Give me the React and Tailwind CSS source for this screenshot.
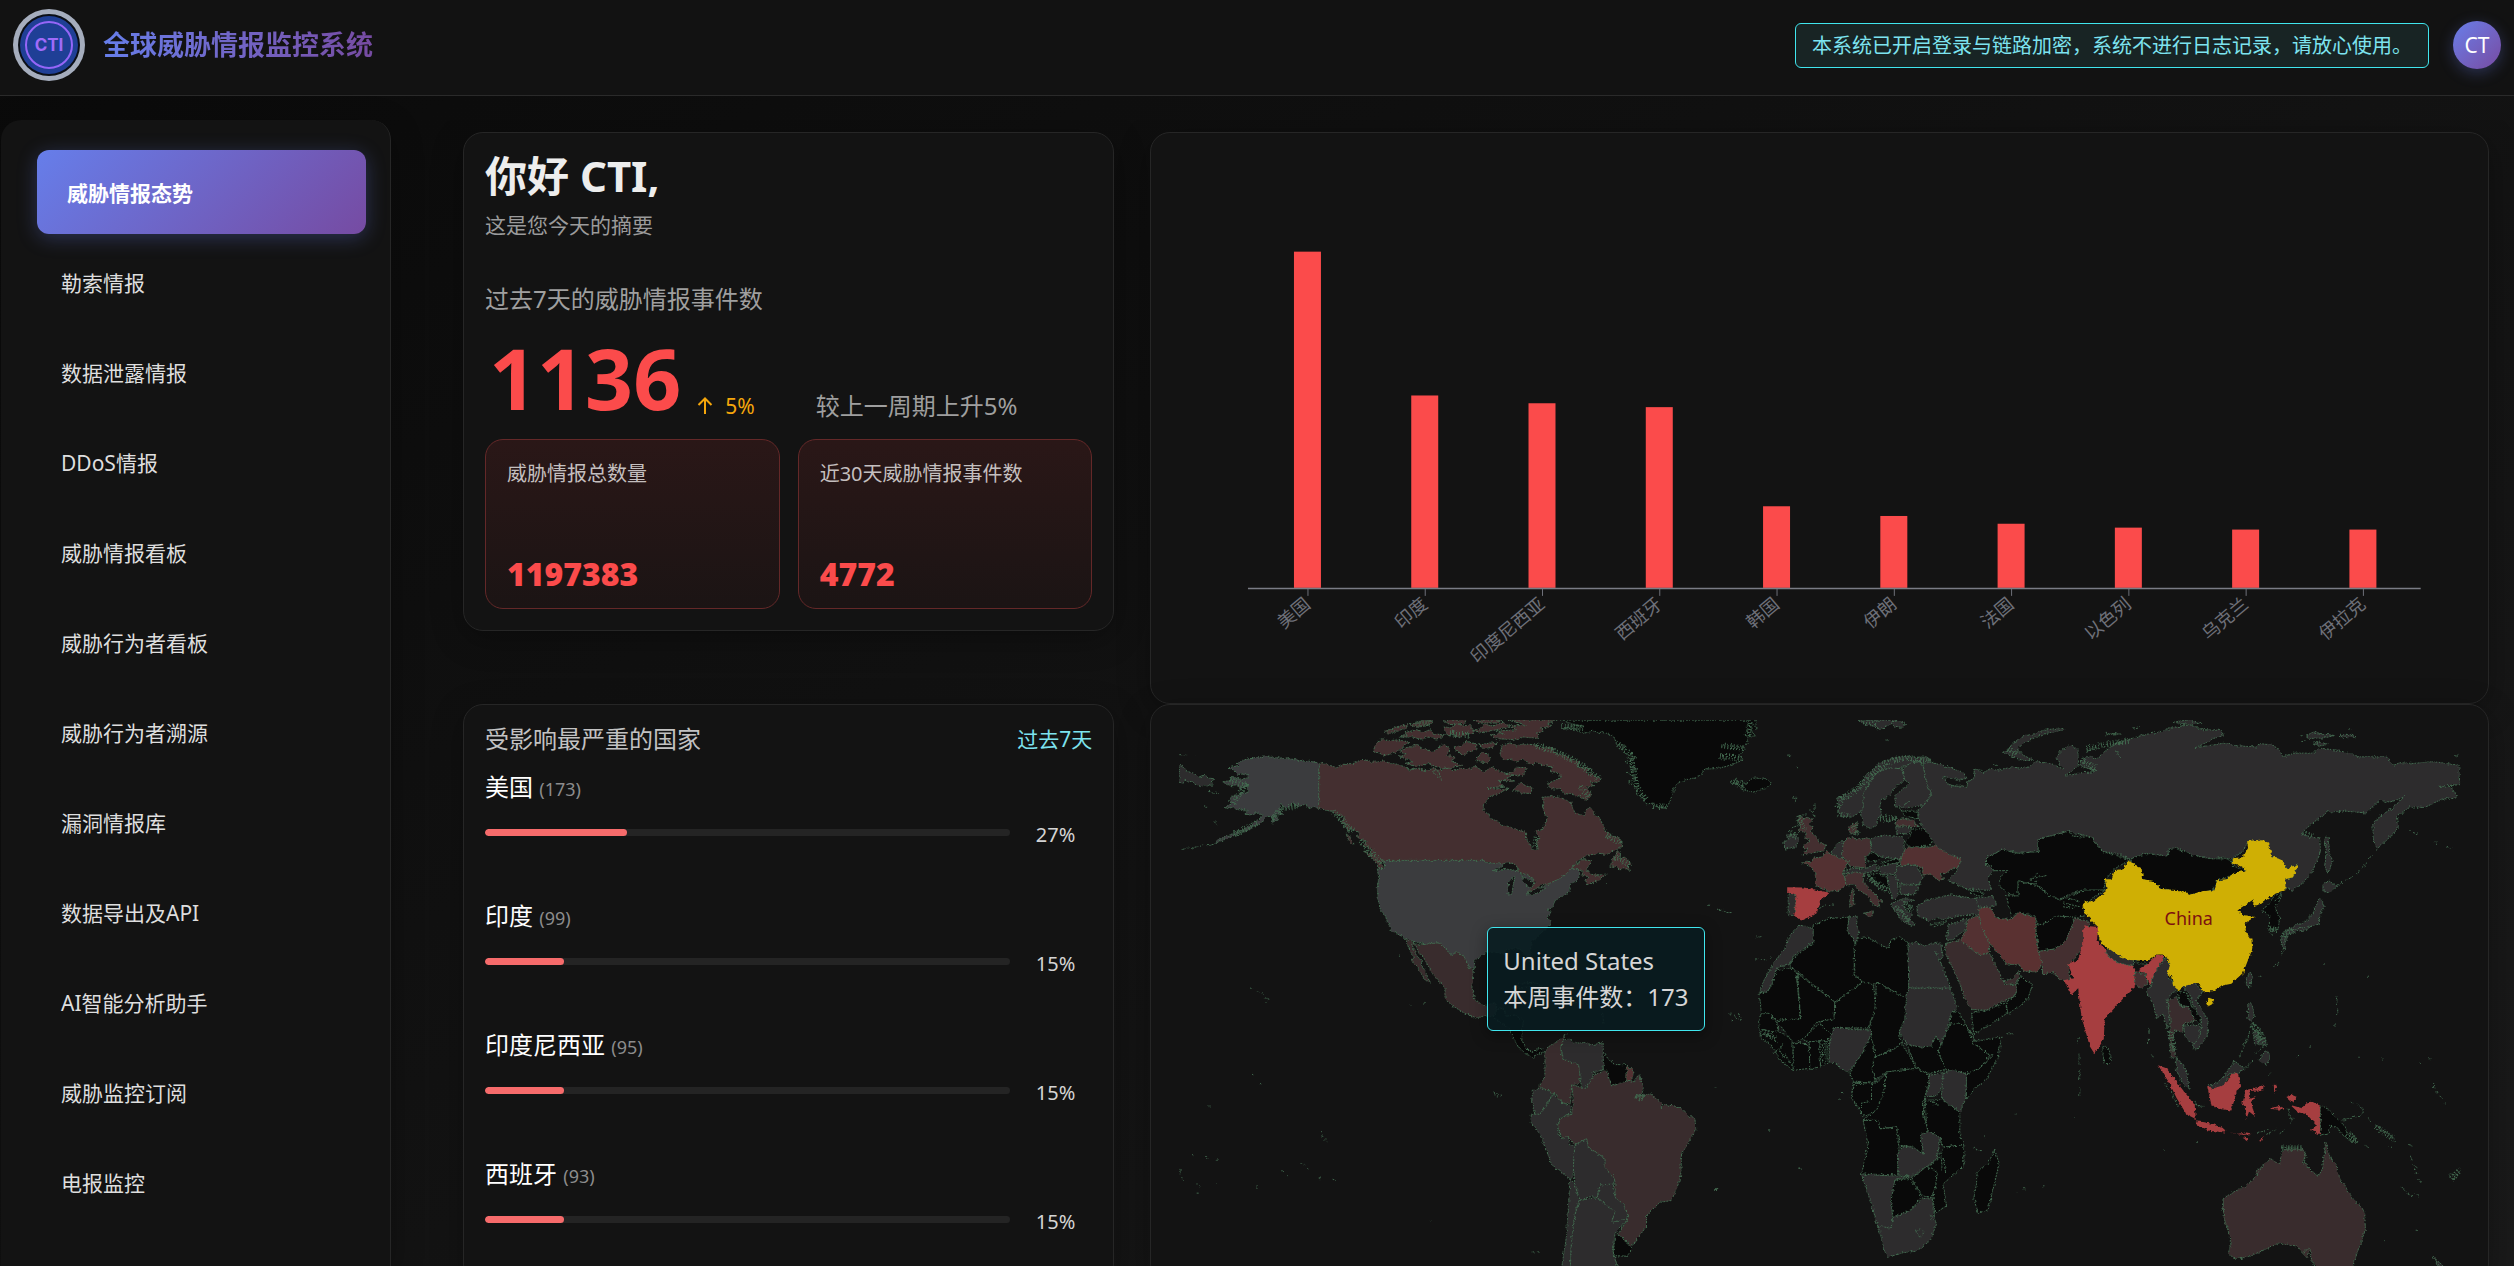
import clsx from "clsx";

const MENU = [
  "威胁情报态势",
  "勒索情报",
  "数据泄露情报",
  "DDoS情报",
  "威胁情报看板",
  "威胁行为者看板",
  "威胁行为者溯源",
  "漏洞情报库",
  "数据导出及API",
  "AI智能分析助手",
  "威胁监控订阅",
  "电报监控",
];

const STATS = [
  { label: "威胁情报总数量", value: "1197383" },
  { label: "近30天威胁情报事件数", value: "4772" },
];

const COUNTRIES = [
  { name: "美国", count: 173, percent: 27 },
  { name: "印度", count: 99, percent: 15 },
  { name: "印度尼西亚", count: 95, percent: 15 },
  { name: "西班牙", count: 93, percent: 15 },
];

const BARS = [
  ["美国", 173],
  ["印度", 99],
  ["印度尼西亚", 95],
  ["西班牙", 93],
  ["韩国", 42],
  ["伊朗", 37],
  ["法国", 33],
  ["以色列", 31],
  ["乌克兰", 30],
  ["伊拉克", 30],
];

// map palette, from "no events" up to the most affected countries
const NONE = "#090909";
const LOW = "#2d2c2d";
const MILD = "#392c2d";
const MID = "#442f30";
const HIGH = "#533132";
const HOT = "#a63e40";
const US = "#3b3c3e";

// each region keeps its own origin, the outlines share one scale
const REGIONS = [
  {
    name: "north-america",
    transform: "translate(-1 -30) scale(.33333 .36735)",
    shapes: [
      [LOW, "88,205 104,210 112,222 130,226 148,236 165,232 178,240 195,242 180,250 190,258 175,262 160,258 150,264 138,256 125,250 105,246 98,254 88,250"],
      [MID, "506,198 540,205 560,212 580,202 600,204 625,194 650,190 662,196 680,196 700,192 720,200 742,202 760,208 780,218 800,214 830,220 850,213 862,218 878,248 848,222 880,214 900,212 915,220 930,212 960,216 975,206 1000,222 1030,208 1040,218 1062,225 1090,232 1070,240 1095,248 1045,246 1062,262 1010,268 1075,270 1050,280 1020,290 1000,315 1002,330 1018,340 1020,350 1040,355 1055,366 1070,370 1100,380 1130,388 1130,405 1142,422 1150,436 1165,434 1160,412 1170,400 1155,385 1180,378 1192,345 1180,325 1182,305 1176,292 1205,290 1230,292 1262,305 1275,335 1300,342 1310,325 1322,318 1335,340 1350,350 1368,385 1392,398 1410,405 1416,425 1405,432 1370,448 1350,445 1310,450 1290,462 1265,484 1298,462 1325,465 1318,480 1310,488 1318,500 1345,506 1368,500 1352,516 1312,530 1305,518 1316,508 1296,505 1300,492 1280,488 1250,505 1220,518 1195,528 1172,530 1160,542 1140,548 1130,555 1140,530 1152,515 1120,500 1105,495 1080,475 1040,475 1000,464 700,464 690,472 660,440 670,436 640,425 648,412 620,400 628,388 600,375 596,385 575,355 584,345 560,340 550,330 530,328 506,322"],
      [MID, "1400,440 1412,445 1410,458 1425,455 1445,475 1432,478 1442,492 1420,484 1410,490 1400,480 1380,480 1390,468 1388,460"],
      [MID, "640,438 668,448 690,468 704,486 690,486 672,464"],
      [MID, "588,392 600,398 612,420 600,415"],
      [MID, "668,168 684,138 705,134 715,138 742,136 780,142 762,152 752,162 720,175 700,180 690,172"],
      [MID, "745,180 770,176 748,168 765,158 800,150 820,160 850,168 885,146 898,160 890,178 915,182 908,196 938,205 890,214 855,208 840,200 800,208 765,200 790,194"],
      [MID, "1050,175 1056,150 1080,144 1100,152 1120,146 1160,150 1180,158 1210,160 1220,175 1250,178 1262,190 1290,196 1282,210 1320,215 1310,226 1355,240 1345,252 1320,248 1332,262 1310,262 1325,285 1310,302 1290,286 1300,296 1270,285 1245,282 1232,268 1205,270 1190,256 1210,248 1232,240 1228,225 1200,222 1208,210 1180,205 1160,196 1150,206 1120,188 1100,196 1080,188 1062,192"],
      [MID, "1075,82 1222,82 1192,92 1206,98 1170,104 1180,112 1160,118 1166,132 1120,128 1100,136 1040,132 1020,122 1060,118 1040,112 1100,108 1082,98 1130,95 1100,88"],
      [MID, "966,110 990,106 1000,94 1030,98 1060,88 1080,100 1040,108 1000,116"],
      [MID, "880,84 920,82 950,84 940,92 900,94"],
      [MID, "970,82 1060,82 1040,90 990,90"],
      [MID, "700,115 720,108 740,100 775,94 768,104 740,112 722,118"],
      [MID, "750,128 775,122 765,116 800,108 820,114 842,108 850,120 884,122 860,134 835,128 815,134 785,128"],
      [MID, "778,94 800,90 820,82 848,86 836,96 800,102"],
      [MID, "882,98 905,104 920,90 940,98 962,94 972,118 948,120 930,130 905,120 890,122"],
      [MID, "912,155 935,152 950,140 975,146 982,162 960,168 940,176 925,168"],
      [MID, "984,150 1010,146 1044,142 1030,155 1005,160"],
      [MID, "978,195 985,178 1000,168 1022,184 1014,200 995,196"],
      [MID, "1088,272 1110,252 1130,262 1146,264 1144,282 1112,280"],
      [MID, "1068,228 1090,222 1100,210 1132,212 1118,235"],
      [US, "506,198 506,322 480,320 462,312 445,318 430,308 410,322 392,312 388,330 398,338 376,340 388,352 366,362 372,345 352,344 330,365 306,372 300,380 268,388 240,402 210,412 196,418 200,410 240,394 270,384 300,372 316,356 330,352 336,338 320,334 300,340 285,338 292,326 260,326 250,318 238,324 222,320 245,310 236,300 245,290 262,285 292,278 296,262 270,266 258,258 240,262 218,250 245,246 240,238 272,242 295,240 290,228 262,230 250,218 234,212 265,206 262,198 290,188 330,184 345,178 365,184 410,186 450,192 480,194"],
      [US, "700,464 1000,464 1015,472 1035,472 1080,475 1092,482 1110,500 1130,502 1150,515 1148,532 1130,555 1160,545 1195,528 1220,518 1250,500 1262,488 1285,488 1290,502 1286,516 1268,525 1258,532 1262,545 1240,560 1228,566 1215,574 1210,590 1190,598 1204,606 1192,616 1205,636 1175,660 1145,685 1140,712 1152,740 1145,746 1125,720 1110,705 1085,705 1065,708 1075,722 1040,715 1010,713 975,735 972,762 955,752 940,722 920,712 905,722 870,688 850,692 830,692 790,684 768,676 750,668 725,655 712,630 705,612 692,600 685,575 682,540 686,510 682,486 706,486"],
      [MILD, "764,676 800,692 830,692 870,688 905,722 920,712 940,722 955,752 970,765 966,810 975,845 1005,860 1032,852 1045,870 1035,890 1000,888 980,893 940,878 905,858 885,842 885,812 866,790 850,775 835,752 822,730 805,712 798,696 785,690 798,720 812,735 820,755 842,798 826,790 805,758 785,738 790,728 778,705"],
      [NONE, "1030,890 1040,870 1060,866 1070,888 1095,885 1120,900 1115,950 1130,978 1150,985 1170,975 1186,985 1160,992 1150,1002 1128,990 1115,980 1100,965 1090,945 1075,920 1050,905"],
      [NONE, "1090,812 1115,798 1150,796 1190,812 1225,825 1195,828 1150,808"],
      [NONE, "1232,835 1262,832 1290,848 1262,856 1240,850"],
    ],
    lakes: [
      "1030,492 1050,484 1070,468 1098,475 1105,492 1072,488",
      "1074,555 1076,522 1096,506 1090,530 1086,556",
      "1115,506 1136,516 1155,525 1142,542 1125,528",
      "1126,558 1160,540 1190,538 1156,556",
    ],
    marks: "M98,434l20-5M125,430l20-4M150,426l10-6M170,424l25-4M88,176h26M134,176h4M175,276l14,2M186,280l20,2M162,315l10,4M192,358l8,8M300,812l14,-2M318,818l12,4M334,824l10,8M344,838l14,4M346,850l8-4M306,1046l4,2M329,1070l6,4M1032,1093l6,16M1040,1100l6,8M1052,1106h6M176,1132l8,4M510,1200l4,4M514,1214l8,2M524,1224l8,6M168,1270l10,6M200,1280h4M126,1268h4M90,1304v12M94,1326l4,10M138,1348l6,-4M148,1350h4M140,1370h6M196,1342l4,2M395,1308l4,6M412,1322l8,4M450,1290l18,4M470,1302h10M506,1326l4,8M548,1332l10,4M320,1352l8,4M840,1445h6M782,858h4M822,852h8M744,722h6M1148,1530h6M1164,1530h6",
    fjords: "M550,332L575,350L590,372L615,385M630,410L655,435L700,475M368,352L395,322L450,314M320,362L250,394M240,245L285,260L250,310M1160,152L1210,165L1280,195L1345,240M1290,262L1318,292M1160,400L1155,430M800,92L845,92M900,118L960,122",
  },
  {
    name: "south-america",
    transform: "translate(309 -30) scale(.33333 .36735)",
    shapes: [
      [NONE, "300,82 892,82 882,96 892,106 875,112 886,125 862,128 866,145 848,150 856,162 838,178 850,190 825,200 800,208 770,214 735,215 722,232 700,240 675,245 650,255 640,275 632,300 618,325 605,318 590,322 580,308 560,310 548,292 530,285 532,268 505,250 530,240 502,225 535,215 496,195 528,185 495,172 492,150 470,145 462,128 440,118 400,112 370,118 340,104 310,106 345,96 372,100"],
      [NONE, "812,252 830,240 832,256 850,246 855,258 878,240 915,240 935,255 918,268 880,278 845,270 852,262"],
      [MILD, "255,985 270,968 290,960 318,936 302,972 308,1005 358,1020 360,1070 335,1075 332,1125 310,1125 285,1100 238,1080 255,1050"],
      [LOW, "318,936 312,955 330,948 340,962 375,960 400,966 430,960 430,985 440,1000 432,1032 395,1045 398,1072 365,1086 356,1020 310,1005 302,972"],
      [NONE, "430,985 445,1005 465,1020 502,1020 502,1065 455,1078 440,1060 430,1030"],
      [HIGH, "502,1022 522,1040 512,1068 500,1065"],
      [LOW, "220,1090 245,1083 278,1100 260,1130 240,1155 225,1158 215,1120"],
      [LOW, "214,1155 240,1155 262,1130 278,1100 310,1125 332,1130 332,1155 300,1165 292,1195 305,1222 325,1215 330,1238 345,1240 342,1300 335,1335 275,1292 262,1260 240,1210 214,1178"],
      [MILD, "440,1035 455,1078 500,1065 520,1068 538,1045 550,1085 545,1105 572,1100 605,1122 604,1140 612,1128 660,1135 685,1160 705,1165 708,1200 690,1225 665,1265 662,1330 635,1390 600,1395 560,1430 560,1460 515,1515 475,1480 505,1440 490,1400 465,1380 465,1330 435,1300 435,1275 385,1245 380,1222 345,1238 325,1215 310,1222 295,1195 300,1168 335,1155 340,1110 335,1075 380,1085 400,1050"],
      [LOW, "345,1238 380,1222 385,1245 435,1275 435,1300 465,1330 460,1348 420,1348 412,1382 390,1380 360,1388 345,1345 340,1300"],
      [LOW, "412,1382 420,1348 460,1345 465,1380 490,1400 505,1430 490,1450 455,1450 465,1420"],
      [LOW, "330,1330 345,1345 358,1390 345,1430 335,1500 330,1600 300,1600 318,1500 325,1420"],
      [LOW, "358,1390 412,1382 465,1420 455,1450 505,1440 465,1480 460,1530 472,1568 465,1600 330,1600 335,1500 345,1430"],
      [NONE, "465,1485 480,1486 515,1520 505,1542 460,1540"],
    ],
    marks: "M770,596l18,6M792,600l6,4M800,606h18M742,586h6M984,182l10-4M1000,294l12,2M1006,300v6M890,672h16M886,732l20,2M912,734l10,2M928,730l8-6M810,878v8M824,884l4,12M816,900h8M836,880l6,20M525,1108l20-6M535,1118l20,-12M1066,312l-6,20M438,528l6,2M764,1084h6M925,1198h6M1016,1302h6M766,1360h6M428,880l4,28",
    fjords: "M475,148L510,175L520,215L530,262L560,300M580,315L622,318M872,90L862,130M785,150L850,160M780,180L845,188M305,98L370,104M820,250L850,262M465,455L512,478M530,1105L552,1112M440,395L482,418",
  },
  {
    name: "europe-africa",
    transform: "translate(579 -30) scale(.33333 .36735)",
    shapes: [
      [LOW, "385,82 502,82 488,92 470,98 448,108 430,98 410,96"],
      [LOW, "486,86 508,84 528,94 515,102 492,98"],
      [LOW, "818,170 835,162 850,145 880,125 910,120 940,110 1000,102 1005,108 940,120 890,140 862,160 875,175 912,192 880,192 850,182"],
      [LOW, "320,295 350,285 380,270 400,250 402,235 430,215 445,200 470,195 490,184 530,180 560,184 590,182 610,195 580,200 560,195 530,205 500,215 470,215 440,225 420,250 400,285 400,320 388,335 365,346 335,345 325,325 330,312"],
      [LOW, "400,320 400,285 420,250 440,225 480,212 520,215 525,245 500,260 480,285 455,300 450,318 456,340 444,352 440,368 420,378 402,368 393,330"],
      [LOW, "520,215 540,200 565,195 580,205 590,250 605,285 580,315 530,320 498,318 495,290 520,268 540,255 525,245"],
      [MID, "210,345 235,350 252,348 235,368 250,372 245,385 260,400 268,415 288,422 282,438 240,445 215,450 235,432 218,428 240,410 225,402 230,388 205,385 212,370 202,358"],
      [LOW, "162,412 178,408 170,396 195,392 208,404 200,425 180,430 165,434"],
      [MID, "356,372 382,360 378,376 386,388 362,392"],
      [LOW, "425,405 460,395 520,400 525,440 510,460 455,455 425,440"],
      [LOW, "303,442 320,420 340,408 340,445 345,460 325,458"],
      [MID, "340,420 345,405 370,400 378,408 420,402 425,440 405,455 410,485 360,480 350,465 335,450"],
      [HIGH, "216,472 232,466 245,470 250,458 275,455 290,440 325,458 357,465 340,495 350,530 330,545 300,548 258,535 258,500 240,480"],
      [LOW, "175,555 200,560 193,615 175,612"],
      [LOW, "340,492 375,485 405,488 440,472 442,492 400,500 345,500"],
      [MID, "345,505 375,495 402,500 400,522 425,545 460,578 445,575 450,592 430,585 415,560 385,545 370,528 348,532"],
      [MID, "400,608 432,602 424,620"],
      [MID, "360,560 370,542 372,585 360,592"],
      [NONE, "405,455 430,442 455,455 440,467 415,465"],
      [NONE, "455,470 500,460 512,468 465,480"],
      [LOW, "445,482 505,470 495,500 455,502"],
      [NONE, "412,502 440,500 472,510 475,540 455,535 435,522"],
      [LOW, "475,505 500,505 508,560 490,570 478,540"],
      [LOW, "505,478 560,478 580,510 570,530 510,528 495,500"],
      [LOW, "510,530 568,532 555,558 512,556"],
      [LOW, "482,582 520,568 552,572 518,582 530,602 548,612 540,622 558,642 530,636 510,622 496,602"],
      [NONE, "512,330 565,330 565,350 535,345"],
      [MID, "495,362 515,350 550,355 565,372 500,370"],
      [LOW, "498,372 545,375 535,392 500,390"],
      [NONE, "525,415 540,400 550,378 595,378 610,405 600,425 540,428"],
      [HIGH, "512,455 530,430 600,428 620,422 635,425 660,445 697,458 690,480 660,490 648,500 630,500 642,515 628,520 600,500 580,505 578,485 550,475 512,478"],
      [NONE, "705,542 760,552 755,562 735,558"],
      [LOW, "560,590 590,572 660,558 740,568 750,590 745,612 690,615 640,625 625,620 600,628 568,618"],
      [LOW, "738,566 792,562 800,585 780,595 745,590"],
      [LOW, "655,640 712,622 705,655 670,680 650,680"],
      [NONE, "648,690 672,685 655,715 645,712"],
      [HIGH, "715,625 745,615 760,650 780,690 778,715 750,722 690,685 708,655"],
      ["#5a3131", "742,595 780,590 800,622 840,625 870,605 918,622 920,680 940,745 920,768 880,765 870,750 830,745 800,712 782,692 758,652"],
      [MILD, "650,690 690,680 745,720 780,718 800,755 825,800 860,805 858,832 800,855 770,872 725,870 705,840 690,800 665,750 645,715"],
      [MILD, "822,792 850,785 872,762 860,802 832,800"],
      [NONE, "872,780 908,802 895,840 870,860 835,882 828,850 860,830 858,805"],
      [NONE, "725,880 770,872 828,852 832,880 780,912 732,936"],
      [NONE, "770,455 820,435 860,445 925,440 925,405 1015,385 1030,398 1085,402 1120,440 1200,462 1150,490 1125,520 1125,545 1060,545 1020,555 990,570 960,560 920,530 865,520 865,562 835,555 808,530 812,508 836,492 790,492 785,478 770,475"],
      [NONE, "835,580 830,560 865,562 865,520 920,532 960,560 990,572 1060,545 1125,545 1062,585 1065,615 1030,620 990,620 925,640 915,615 870,605 845,615"],
      [NONE, "918,640 950,635 975,615 1030,618 1032,645 1010,680 975,705 925,712"],
      [MID, "925,712 975,705 1010,680 1035,622 1078,630 1070,690 1015,750 1022,792 990,790 975,770 938,772 938,745"],
      [LOW, "165,705 172,680 200,650 210,640 230,645 252,650 252,685 190,725 178,748 145,755 130,790 115,822 88,824 105,785 130,745"],
      [NONE, "250,640 300,622 355,618 358,655 375,690 372,775 400,795 315,850 180,750 190,730 250,690"],
      [LOW, "358,618 382,615 380,640 388,655 378,690 365,672 352,655"],
      [NONE, "385,675 410,672 475,705 485,680 510,672 535,688 537,838 525,838 440,795 430,803 400,795 375,775 373,700"],
      [LOW, "535,690 560,688 580,695 632,688 640,725 632,735 618,712 655,790 662,812 537,812"],
      [LOW, "537,812 662,812 682,862 660,890 650,930 632,965 618,942 605,970 570,972 530,965 508,930 525,895 525,840"],
      [NONE, "88,826 115,822 130,790 140,765 180,755 203,772 212,895 140,900 118,880 95,882"],
      [NONE, "203,772 315,850 313,895 260,905 225,950 190,960 165,930 140,900 212,895"],
      [NONE, "315,850 400,795 430,803 440,860 415,920 330,920 300,940 268,905 313,895"],
      [NONE, "440,795 530,840 525,895 508,930 515,965 435,1000 430,970 415,930 435,870"],
      [NONE, "86,905 95,882 118,880 140,905 145,930 175,945 190,965 190,1036 155,1010 125,970 92,945"],
      [NONE, "190,965 215,960 238,970 240,1030 190,1036"],
      [NONE, "218,952 268,908 305,940 290,955 238,958"],
      [NONE, "238,958 270,955 272,1025 240,1034"],
      [NONE, "270,955 300,955 298,1015 272,1025"],
      [LOW, "310,920 330,918 370,925 425,925 425,950 400,985 375,1020 355,1040 330,1030 318,1015 298,1012 298,970"],
      [NONE, "425,935 430,970 438,1000 428,1030 440,1068 370,1065 360,1040 400,985"],
      [NONE, "436,1000 500,975 515,960 560,1030 470,1040 440,1060 425,1030"],
      [NONE, "530,965 570,972 605,970 618,942 632,965 625,990 650,1032 600,1045 560,1030"],
      [NONE, "650,930 665,905 710,910 725,955 780,995 750,1030 710,1045 650,1035 625,985"],
      [NONE, "665,880 685,875 722,932 735,955 710,912 660,908"],
      [NONE, "725,958 815,945 805,1000 770,1060 735,1085 710,1115 708,1045 750,1030 790,992 780,995"],
      [NONE, "370,1068 440,1070 468,1045 465,1100 440,1150 400,1160 365,1110"],
      [NONE, "370,1075 425,1072 425,1120 395,1125 395,1150 365,1110"],
      [NONE, "470,1040 560,1030 600,1050 585,1110 580,1150 595,1200 575,1210 580,1260 545,1242 510,1240 500,1190 450,1195 440,1172 400,1170 440,1145 460,1100"],
      [LOW, "595,1050 640,1042 640,1080 620,1105 585,1108 600,1075"],
      [LOW, "640,1045 665,1035 710,1045 708,1110 690,1150 635,1110"],
      [NONE, "588,1118 635,1115 690,1150 690,1210 702,1238 640,1245 628,1220 595,1200 580,1150"],
      [NONE, "400,1172 445,1172 450,1195 500,1190 508,1240 503,1320 395,1318 415,1240"],
      [NONE, "640,1245 702,1238 702,1295 640,1345 650,1405 615,1425 610,1382 622,1315 590,1300 625,1278"],
      [LOW, "505,1320 503,1265 520,1242 550,1245 582,1265 572,1210 600,1202 632,1220 622,1275 590,1298 545,1325"],
      [NONE, "545,1330 590,1298 622,1312 618,1350 605,1382 575,1375"],
      [LOW, "395,1318 505,1324 540,1325 495,1335 490,1380 484,1465 445,1465 425,1400"],
      [NONE, "495,1335 540,1330 575,1378 545,1415 515,1425 490,1440 484,1390"],
      [LOW, "446,1460 484,1465 488,1438 520,1425 545,1415 580,1385 608,1382 612,1430 620,1455 600,1500 560,1528 520,1532 475,1544 462,1525"],
      [NONE, "795,1250 808,1290 795,1340 775,1415 745,1425 732,1385 740,1345 742,1310 775,1290"],
      [LOW, "558,1475 572,1466 584,1476 570,1490"],
    ],
    marks: "M190,290l10,2M196,296v6M240,325l14,20M200,345l30-8M205,360l20-10M185,375l20-6M175,385l24,4M172,180h10M200,210l8,4M268,595l20-10M298,584l14,2M420,508l30,20M425,520l25,20M470,545l15,15M500,590l40,40M515,600l30,45M520,575l30,20M600,640l40-10M612,645l40-15M540,300l-30,26M450,350l20-12M460,360l40-10M640,255l70,12M650,268l66,-2M735,215l50,8M790,205h14M200,778l12,116M100,925l40,6M95,935l35,10M130,945l15,20M130,990l30-25M145,975l20,30M165,990l20,30M278,965v50M286,960v55M292,960v52M640,1275l8,40M634,1270l4,40M1045,945v20M1048,990v30M1050,1030v30M1050,1085v20M730,1246l16,8M750,1254h8M830,936h22M860,1366h4M880,1358h8M940,1350h4M858,1155h6M206,1302h6M116,1198h3M336,1094l4,4M328,1114h5M764,1216h4M470,136h5M1032,1164h5M586,1120l4,60M578,1120v40M600,1116l20,12M612,1130h18M600,1432h16M602,1442h12M895,525l30-28M900,515l50,-10M905,530l20,-10M1000,580l50,10M1005,565l45,10M1000,590l30,5",
    fjords: "M325,320L335,295L380,272L420,235L470,198L530,184L605,195M325,335L360,345M205,352L225,380M180,395L200,400M370,370L385,392M415,510L470,545M495,590L540,630M520,580L550,600M450,350L500,348M835,160L860,175M400,88L440,92M95,930L140,950",
  },
  {
    name: "asia-pacific",
    transform: "translate(929 -30) scale(.33333 .36735)",
    shapes: [
      [LOW, "-470,205 -460,195 -410,205 -350,225 -338,240 -360,245 -410,235 -400,252 -385,262 -335,262 -340,250 -315,240 -318,214 -290,225 -270,215 -250,218 -200,210 -170,214 -150,208 -135,195 -90,200 -50,215 -72,185 -55,165 -30,150 -5,162 -4,205 -45,235 10,225 50,222 0,205 8,190 30,178 50,188 78,165 110,145 180,125 250,112 290,100 330,95 370,108 425,110 432,125 400,132 370,148 345,157 400,150 430,145 470,152 530,155 545,146 580,150 600,165 610,182 640,172 700,172 720,158 780,165 840,182 920,182 942,205 960,198 1000,200 1060,195 1138,205 1140,258 1080,262 1115,266 1133,290 1080,300 1035,320 990,318 950,345 955,375 920,410 890,435 880,400 880,365 900,345 940,320 975,290 950,300 930,305 900,300 870,325 860,335 800,330 740,332 665,388 690,402 720,402 722,440 700,490 670,525 640,545 615,540 615,515 640,510 655,475 620,485 605,465 575,450 545,410 505,412 490,440 455,460 430,455 400,460 340,450 320,440 285,430 265,435 265,452 200,445 150,460 110,445 70,440 35,400 -35,385 -125,405 -125,440 -190,442 -230,435 -280,455 -280,478 -258,490 -275,510 -265,545 -300,545 -345,540 -395,518 -370,495 -355,460 -400,445 -430,425 -450,400 -470,375 -485,350 -485,325 -470,315 -445,285 -460,250"],
      [LOW, "680,125 700,114 730,120 765,124 735,130 690,132"],
      [LOW, "778,124 805,120 828,128 800,130"],
      [LOW, "700,145 722,142 748,148 720,152"],
      [LOW, "280,88 320,82 368,90 330,94"],
      [LOW, "735,400 746,402 750,450 760,465 745,500 735,480 740,440"],
      [LOW, "730,530 748,520 772,535 745,552 730,548"],
      [LOW, "715,572 724,565 733,590 720,615 718,638 700,640 680,652 650,658 612,668 618,655 650,640 672,635 700,608"],
      [LOW, "602,672 624,670 615,705 606,690"],
      [NONE, "548,598 565,585 580,565 605,552 600,575 585,590 600,620 595,650 568,655 570,615 556,608"],
      [LOW, "500,785 512,768 518,780 508,812 500,802"],
      [LOW, "503,860 515,850 524,885 512,900 525,915 505,895"],
      [LOW, "520,925 535,930 540,950 556,945 560,970 535,962 525,970"],
      [LOW, "538,1005 560,980 570,1002 560,1022 548,1015"],
      [NONE, "150,460 200,445 262,452 270,432 285,430 305,438 320,440 340,450 400,460 455,460 460,480 500,490 410,520 400,545 335,557 245,540 190,515"],
      [HOT, "10,655 15,642 55,645 52,680 65,695 110,735 160,750 170,768 205,745 232,720 255,725 225,770 212,805 195,770 165,765 165,810 150,820 120,850 75,895 72,950 45,992 30,970 5,890 -5,812 -25,830 -48,790 -20,785 -35,745 -5,735 10,690"],
      [LOW, "75,715 90,705 125,725 162,735 160,752 110,742"],
      [NONE, "166,742 182,732 202,748"],
      [MID, "165,768 195,772 205,800 185,812 165,802"],
      [NONE, "68,972 80,970 94,1000 88,1018 72,1016"],
      [LOW, "255,730 275,750 262,775 292,815 262,842 272,890 262,920 250,880 230,895 222,860 200,820 212,805 225,770"],
      [MILD, "262,845 290,835 302,862 330,860 350,900 312,910 308,932 285,925 278,960 290,1005 275,1000 268,950 272,900"],
      [LOW, "305,808 345,798 370,822 350,845 385,900 382,945 345,982 338,965 365,935 365,895 335,850 330,825"],
      [NONE, "292,820 320,825 335,858 362,890 360,910 345,895 325,862 300,858"],
      [LOW, "312,915 360,910 362,940 340,965 315,942"],
      [LOW, "290,1005 300,1010 320,1035 328,1088 308,1070 290,1035"],
      [LOW, "385,1078 410,1070 430,1055 465,1010 492,1030 475,1045 450,1045 430,1080 395,1088"],
      [HOT, "382,1078 398,1086 435,1075 455,1045 475,1045 484,1080 472,1090 455,1145 430,1142 395,1130"],
      [HOT, "235,1022 260,1030 300,1078 345,1130 348,1168 320,1155 290,1110 270,1072"],
      [HOT, "348,1175 370,1176 400,1182 440,1198 435,1205 390,1200 355,1188"],
      [HOT, "500,1088 530,1085 552,1074 550,1090 510,1092 508,1110 528,1106 515,1122 525,1160 508,1148 500,1168 495,1135 488,1125"],
      [HOT, "582,1072 592,1078 584,1100"],
      [HOT, "570,1140 600,1132 616,1142 590,1142"],
      [HOT, "620,1108 635,1102 652,1108 640,1124"],
      [HOT, "632,1130 665,1138 690,1118 722,1132 722,1210 690,1198 712,1185 680,1155 655,1150"],
      [HOT, "538,1228 554,1214 546,1230"],
      [HOT, "445,1204 475,1208 500,1205 520,1208 490,1212"],
      [HOT, "490,1218 508,1222 500,1228"],
      [NONE, "722,1132 748,1142 770,1165 798,1190 800,1205 832,1232 795,1218 772,1190 750,1188 745,1210 722,1210"],
      [MILD, "430,1385 455,1370 500,1350 530,1325 528,1310 545,1300 570,1275 600,1290 605,1262 620,1250 670,1250 680,1268 668,1285 715,1325 728,1305 738,1230 752,1275 768,1290 780,1330 820,1385 855,1420 857,1470 835,1525 820,1568 815,1600 715,1600 705,1568 692,1545 695,1522 680,1545 665,1530 655,1515 600,1505 540,1530 490,1548 460,1548 447,1532 455,1500 430,1430"],
      [LOW, "1060,1542 1090,1568 1110,1600 1090,1600"],
    ],
    marks: "M770,532l20-8M800,518l20-10M830,500l10-8M846,484l16-14M868,460l12-12M960,340l14-6M985,384h10M1000,388l14,4M1060,412l12,6M1078,418h6M1100,428l14,2M1118,432l6-6M1124,178l10,4M1130,180l8,-6M805,106h10M660,122h6M665,140h12M75,118l50,2M80,122l30-4M160,104l20-4M100,150l50-15M110,165l10,20M20,170l30-15M12,210l40,10M580,755l20-15M606,722l6-20M540,780l8-2M565,660l15,6M620,655l80-12M612,690l8-20M480,1000l20-50M490,1035l30-25M500,960l10-30M520,905l20,15M530,925l20,10M545,960l15,10M525,990l30-20M515,915l25,40M208,920v14M206,950v14M215,990l6,14M255,1070l10,16M275,1095l20,40M770,835l3,20M774,870v14M766,910v10M652,1000l4-6M690,972h4M836,1000h4M905,1005h4M1016,1014l6,4M1046,1004h6M1062,1070v14M1070,1094l8,6M1080,1106l10,6M1094,1126l6,6M810,1118l12,8M826,1126l20,10M850,1140v14M826,1160l-40,12M845,1155l-18,14M866,1164l10,14M886,1184l16,10M900,1198l20,8M925,1205l14,16M936,1222l12,8M925,1245h12M985,1236l10,6M992,1268l6,14M998,1290l12,8M1006,1305l6,14M1016,1330l8,12M965,1352l14,14M984,1372l14,6M1006,1372l10,6M1110,1320l14-10M1120,1334l8-16M1130,1310l12,-8M855,1240l12,6M820,1215l15,18M810,1205l15,10M536,1205l30-8M560,1210l30-14M600,1208l20-14M640,1165l-8,16M625,1140l10,30M565,1050l8,-8M345,1118l8,16M350,1232h4M250,1253h5M730,746h6M862,782h3M1008,1471h4M914,1502h4M345,1130l30,4M545,570l50,-30M585,575l20-20M428,1400l6,30M530,1320l20,-22M605,1245l50,0M675,1255v40M670,1530l20-10M1064,1550l20,24",
    fjords: "M515,912L540,930L555,965M530,940L545,960M888,1188L940,1222M800,1210L835,1235M612,668L640,656M5,190L50,215M20,160L100,145L150,138M668,388L700,400M1115,1330L1140,1308M608,1248L670,1248M270,930L285,985M570,650L595,656",
  },
];

const CHINA =
  "8,585 18,576 40,575 75,550 80,540 75,515 95,515 105,490 130,488 135,475 150,465 162,475 186,485 190,515 220,520 245,542 300,545 335,557 365,548 405,545 412,518 440,515 462,498 500,490 482,480 455,472 460,458 490,455 505,430 502,412 540,408 565,415 578,452 610,465 620,485 655,475 640,510 617,515 617,545 580,558 545,582 520,588 522,570 475,598 490,612 525,618 495,635 500,660 515,680 518,705 505,735 490,770 455,800 425,805 400,820 370,820 355,798 305,808 300,820 280,805 275,780 262,775 272,745 255,720 230,720 205,738 150,735 120,725 65,690 52,662 55,645 20,615";

const card =
  "rounded-[20px] border border-[#262626] bg-[#131313] shadow-[0_8px_32px_rgba(0,0,0,0.3)]";

function Logo() {
  return (
    <svg viewBox="0 0 72 72" className="size-[72px] shrink-0" aria-label="CTI">
      <circle cx="36" cy="36" r="36" fill="#a5adbd" />
      <circle cx="36" cy="36" r="31" fill="#0b0f17" />
      <circle cx="36" cy="36" r="29" fill="#1f3f96" />
      <circle
        cx="36"
        cy="36"
        r="23"
        fill="none"
        stroke="#9566f8"
        strokeWidth="2"
      />
      <text
        x="36"
        y="42"
        textAnchor="middle"
        fontSize="17"
        fontWeight="700"
        fill="#a06bfa"
        className="font-['Inter',sans-serif]"
      >
        CTI
      </text>
    </svg>
  );
}

function Header() {
  return (
    <header className="flex h-24 shrink-0 items-center justify-between border-b border-[#2a2a2a] bg-[#121212] pr-[13px] pb-[5px] pl-[13px]">
      <div className="flex items-center gap-[18px]">
        <Logo />
        <h1 className="bg-linear-to-r from-[#667eea] to-[#764ba2] bg-clip-text text-[27px] leading-10 font-bold text-transparent">
          全球威胁情报监控系统
        </h1>
      </div>
      <div className="flex items-center gap-6">
        <p className="rounded-md border border-[#40e6ee] bg-[#182424] px-4 text-[20px] leading-[43px] text-[#7de3ef]">
          本系统已开启登录与链路加密，系统不进行日志记录，请放心使用。
        </p>
        <button
          type="button"
          className="size-12 rounded-full bg-linear-to-br from-[#667eea] to-[#764ba2] text-[21px] leading-none text-white shadow-[0_4px_15px_rgba(102,126,234,0.3)]"
        >
          CT
        </button>
      </div>
    </header>
  );
}

function Sidebar() {
  return (
    <nav className="ml-px flex w-[390px] shrink-0 flex-col gap-1.5 rounded-t-[20px] border-r border-[#262626] bg-[#131313] py-[30px] pr-6 pl-9 shadow-[0_8px_32px_rgba(0,0,0,0.3)]">
      {MENU.map((item, i) => (
        <a
          key={item}
          href="#"
          className={clsx(
            "flex h-[84px] shrink-0 items-center rounded-xl pt-0.5 text-[21px] leading-8",
            i === 0
              ? "bg-[linear-gradient(135deg,#667eea,#764ba2)] px-[30px] font-bold text-white shadow-[0_4px_20px_rgba(102,126,234,0.3)]"
              : "px-6 text-[#dedede]"
          )}
        >
          {item}
        </a>
      ))}
    </nav>
  );
}

function Summary() {
  return (
    <section className={clsx(card, "self-start px-[21px] pt-3 pb-[21px]")}>
      <h2 className="text-[42px] leading-[62px] font-bold text-[#ededed]">
        你好 CTI,
      </h2>
      <p className="text-[21px] leading-9 text-[#9b9b9b]">这是您今天的摘要</p>
      <p className="mt-9 text-[24px] leading-10 text-[#9f9f9f]">
        过去7天的威胁情报事件数
      </p>
      <div className="flex h-[120px] items-end pb-[15px] pl-1">
        <strong className="text-[84px] leading-[92px] font-bold text-[#fb4b4b]">
          1136
        </strong>
        <span className="ml-4 flex items-center gap-3 text-[21px] leading-9 text-[#f5a60b]">
          <svg viewBox="0 0 16 18" className="h-[18px] w-4" aria-hidden="true">
            <path
              d="M8 17V2M1.500 8 8 1.500 14.500 8"
              fill="none"
              stroke="currentColor"
              strokeWidth="2"
            />
          </svg>
          5%
        </span>
        <span className="ml-[61px] text-[24px] leading-9 text-[#9f9f9f]">
          较上一周期上升5%
        </span>
      </div>
      <div className="grid grid-cols-2 gap-[18px]">
        {STATS.map((stat) => (
          <div
            key={stat.label}
            className="flex h-[170px] flex-col justify-between rounded-[18px] border border-[#642828] bg-linear-to-b from-[#2a1717] to-[#1b1414] px-[21px] pt-[18px] pb-3"
          >
            <span className="text-[20px] leading-8 text-[#c4bfbf]">
              {stat.label}
            </span>
            <strong className="text-[32px] leading-11 font-black text-[#fb4b4b]">
              {stat.value}
            </strong>
          </div>
        ))}
      </div>
    </section>
  );
}

function EventChart() {
  const base = 455;
  return (
    <section className={clsx(card, "col-span-2")}>
      <svg viewBox="0 0 1337 570" className="block w-full">
        {BARS.map(([name, value], i) => {
          const x = 157 + i * 117.3;
          const h = value * 1.944;
          return (
            <g key={name}>
              <rect
                x={x - 14}
                y={base - h}
                width="27"
                height={h}
                fill="#fb4b4b"
              />
              <path d={`M${x} ${base}v8`} stroke="#6e7079" />
              <text
                transform={`translate(${x - 1} ${base + 13}) rotate(-40)`}
                textAnchor="end"
                dominantBaseline="central"
                fontSize="18"
                fill="#6e7079"
              >
                {name}
              </text>
            </g>
          );
        })}
        <path d={`M97 ${base}.5H1270`} stroke="#7a7c85" strokeWidth="1.500" />
      </svg>
    </section>
  );
}

function CountryList() {
  return (
    <section className={clsx(card, "px-[21px] pt-3.5")}>
      <div className="flex items-center justify-between leading-10">
        <h3 className="text-[24px] text-[#c2c2c2]">受影响最严重的国家</h3>
        <a href="#" className="text-[21px] text-[#7de3ef]">
          过去7天
        </a>
      </div>
      <ul className="mt-2">
        {COUNTRIES.map((c) => (
          <li key={c.name} className="h-[129px]">
            <p className="text-[24px] leading-10 text-white">
              {c.name}{" "}
              <span className="text-[18px] text-[#8c8c8c]">({c.count})</span>
            </p>
            <div className="mt-1.5 flex items-center pr-[17px]">
              <div className="h-[7px] flex-1 overflow-hidden rounded bg-[#242424]">
                <div
                  className="h-full rounded bg-[#f66b6b]"
                  style={{ width: `${c.percent}%` }}
                />
              </div>
              <span className="w-[65px] pt-1 text-right text-[20px] leading-8 text-[#d4d4d4]">
                {c.percent}%
              </span>
            </div>
          </li>
        ))}
      </ul>
    </section>
  );
}

function WorldMap() {
  return (
    <section className={clsx(card, "relative col-span-2 pt-[15px]")}>
      <svg viewBox="0 0 1337 560" className="block w-full overflow-hidden">
        <defs>
          <filter
            id="coast"
            x="0"
            y="0"
            width="100%"
            height="100%"
            colorInterpolationFilters="sRGB"
          >
            <feTurbulence
              type="fractalNoise"
              baseFrequency="0.3"
              numOctaves="2"
              seed="4"
            />
            <feDisplacementMap
              in="SourceGraphic"
              scale="4"
              xChannelSelector="R"
              yChannelSelector="G"
            />
          </filter>
        </defs>
        <g filter="url(#coast)" stroke="#42694f" strokeDasharray="2 1">
          {REGIONS.map((region) => (
            <g key={region.name} transform={region.transform}>
              {region.shapes.map(([fill, points]) => (
                <polygon
                  key={points}
                  points={points}
                  fill={fill}
                  stroke={fill === HOT ? "none" : undefined}
                  vectorEffect="non-scaling-stroke"
                />
              ))}
              {region.lakes?.map((points) => (
                <polygon
                  key={points}
                  points={points}
                  fill="#131313"
                  vectorEffect="non-scaling-stroke"
                />
              ))}
              <path
                d={region.marks}
                fill="none"
                vectorEffect="non-scaling-stroke"
              />
              <path
                d={region.fjords}
                fill="none"
                strokeWidth="6"
                strokeDasharray="1 2"
                vectorEffect="non-scaling-stroke"
              />
            </g>
          ))}
          <g
            transform="translate(929 -30) scale(.33333 .36735)"
            fill="#cfaf04"
            stroke="none"
          >
            <polygon points={CHINA} />
            <polygon points="378,850 390,838 404,842 396,856 384,862" />
          </g>
          <polygon
            points="172,537 225,538 300,552 270,575 262,605 240,618 215,628 193,615 200,560 172,552"
            transform="translate(579 -30) scale(.33333 .36735)"
            fill={HOT}
            stroke="none"
          />
        </g>
        <text x="1038" y="205" textAnchor="middle" fontSize="18" fill="#7c1010">
          China
        </text>
      </svg>
      <div className="absolute top-[222px] left-[336px] rounded-md border border-[#40e6ee] bg-[#091c20]/90 px-[15px] py-[15px] text-[24px] leading-9 text-[#d6d6d6] shadow-[0_4px_16px_rgba(0,0,0,0.4)]">
        <p>United States</p>
        <p>本周事件数：173</p>
      </div>
    </section>
  );
}

export default function App() {
  return (
    <div className="flex h-screen flex-col overflow-hidden bg-linear-to-br from-[#0a0a0a] to-[#1a1a1a] font-['Noto_Sans','Noto_Sans_CJK_SC',sans-serif]">
      <Header />
      <div className="flex min-h-0 flex-1 items-stretch pt-6">
        <Sidebar />
        <main className="grid flex-1 auto-rows-max grid-cols-3 gap-x-9 overflow-hidden pt-3 pr-[25px] pl-[72px]">
          <Summary />
          <EventChart />
          <CountryList />
          <WorldMap />
        </main>
      </div>
    </div>
  );
}
